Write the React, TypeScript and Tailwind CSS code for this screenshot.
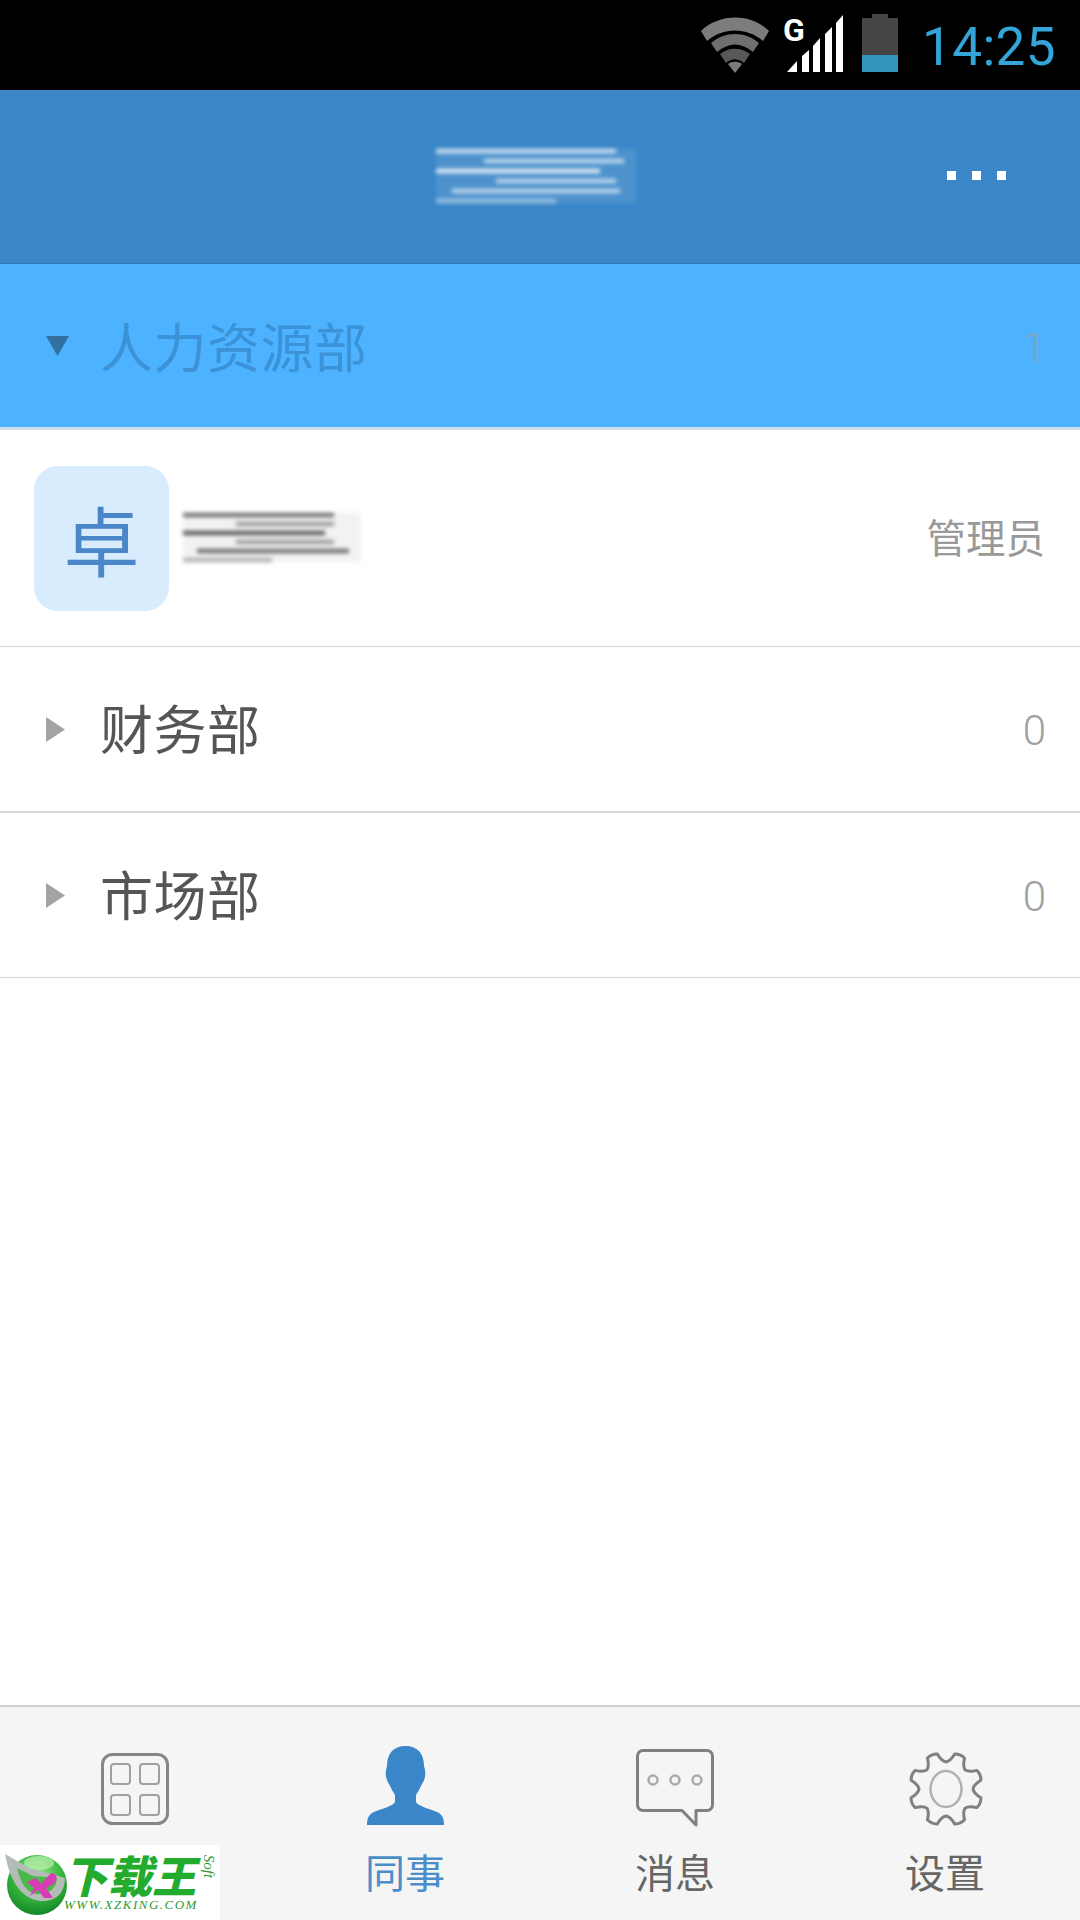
import type { ReactNode } from "react";

const cjk = "font-['Noto_Sans_CJK_SC','Noto_Sans',sans-serif]";

// 8 tooth gear outline, points worked out once at render
const gearPath = () => {
    const pts: string[] = [];
    const teeth = 8;
    for (let i = 0; i < teeth; i++) {
        const a = (i * 2 * Math.PI) / teeth + Math.PI / 8 - Math.PI / 2;
        const step = Math.PI / teeth;
        const at = (r: number, t: number) => `${(37 + r * Math.cos(t)).toFixed(1)} ${(38 + r * Math.sin(t)).toFixed(1)}`;
        const start = a - step;
        if (i === 0) pts.push(`M${at(27, start)}`);
        pts.push(`Q${at(28, a - step * 0.6)} ${at(36, a - step * 0.38)}`);
        pts.push(`Q${at(38, a)} ${at(36, a + step * 0.38)}`);
        pts.push(`Q${at(28, a + step * 0.6)} ${at(27, a + step)}`);
    }
    return pts.join(" ") + "Z";
};

function BlurredName({ tone, width }: { tone: "light" | "dark"; width: number }) {
    const rows = tone === "light"
        ? ["w-[90%] bg-white/80", "w-[70%] ml-[24%] bg-white/70", "w-[82%] bg-white/90", "w-[60%] ml-[30%] bg-white/70", "w-[84%] ml-[8%] bg-white/70", "w-[60%] bg-white/50"]
        : ["w-[85%] bg-black/60", "w-[55%] ml-[30%] bg-black/40", "w-[80%] bg-black/70", "w-[55%] ml-[30%] bg-black/40", "w-[85%] ml-[8%] bg-black/60", "w-[50%] bg-black/30"];
    return <div className={`flex flex-col blur-[2px] ${tone === "light" ? "gap-[6px] bg-white/10" : "gap-[5px] bg-black/5"}`} style={{ width }}>
        {rows.map((r, i) => <div key={i} className={`h-[4px] ${r}`} />)}
    </div>;
}

function Dept({ name, count, className, open, nameClass, countClass }: { name: string; count: string; className: string; open?: boolean; nameClass: string; countClass: string }) {
    return <div className={`flex items-center shrink-0 pl-[46px] pr-[34px] ${className}`}>
        {open
            ? <svg width="23" height="20" viewBox="0 0 23 20" className="shrink-0"><path d="M0 0H23L11.5 20Z" fill="#31709f" /></svg>
            : <svg width="19" height="25" viewBox="0 0 19 25" className="shrink-0"><path d="M0 0L19 12.5L0 25Z" fill="#a3a3a3" /></svg>}
        <span className={`${cjk} text-[53px] leading-none tracking-[0.5px] ${open ? "ml-[31px]" : "ml-[35px] -mt-[4px]"} ${nameClass}`}>{name}</span>
        <span className={`ml-auto font-['Roboto',sans-serif] font-light text-[42px] leading-none mt-[4px] ${countClass}`}>{count}</span>
    </div>;
}

function Tab({ icon, label, active }: { icon: ReactNode; label?: string; active?: boolean }) {
    return <div className="flex flex-col items-center h-full">
        <div className="h-[122px] flex items-end justify-center pb-[2px]">{icon}</div>
        {label && <span className={`${cjk} text-[40px] leading-none mt-[22px] ${active ? "text-[#4a8dc9]" : "text-[#666666]"}`}>{label}</span>}
    </div>;
}

function Watermark() {
    return <div className="absolute left-0 bottom-0 w-[220px] h-[75px] bg-white flex items-center">
        <svg width="68" height="70" viewBox="0 0 68 70" className="shrink-0 ml-[3px]">
            <defs>
                <radialGradient id="ball" cx="50%" cy="30%" r="75%">
                    <stop offset="0%" stopColor="#9be88f" />
                    <stop offset="55%" stopColor="#35b53c" />
                    <stop offset="100%" stopColor="#0f7f24" />
                </radialGradient>
            </defs>
            <circle cx="34" cy="37" r="30" fill="url(#ball)" />
            <ellipse cx="36" cy="15" rx="15" ry="7" fill="#b9f0ae" opacity="0.7" />
            <path d="M2 6L26 20L62 30C62 44 54 52 42 53C24 54 8 40 2 6Z" fill="#b5bcb8" />
            <path d="M14 20L30 28L54 30C54 40 46 46 36 46C24 46 18 36 14 20Z" fill="#4cb84c" />
            <path d="M24 34L33 30L38 36L48 25C55 25 56 34 47 38L43 40L50 50L41 50L35 42L27 48L31 40Z" fill="#d93db4" />
        </svg>
        <div className="flex flex-col shrink-0 -ml-[7px] -mt-[2px]">
            <span className={`${cjk} font-black italic text-[44px] leading-[46px] text-[#22ab2c] whitespace-nowrap`}>下载王</span>
            <span className="font-['Liberation_Serif',serif] italic text-[13px] leading-[15px] tracking-[1.5px] text-[#2a9a35] whitespace-nowrap">WWW.XZKING.COM</span>
        </div>
        <div className="w-[14px] shrink-0 flex justify-center ml-[4px] -mt-[32px]">
            <span className="shrink-0 font-['Liberation_Serif',serif] italic text-[15px] leading-none text-[#2a9a35] rotate-90">Soft</span>
        </div>
    </div>;
}

export default function App() {
    return <div className="relative w-[1080px] h-[1920px] flex flex-col bg-white overflow-hidden">
        <header className="h-[90px] shrink-0 bg-black flex items-start justify-end pr-[24px]">
            <svg width="68" height="56" viewBox="0 0 68 56" className="mt-[17px]">
                <path d="M0 14C18 -4 50 -4 68 14L62 24C46 10 22 10 6 24Z" fill="#7c7c7c" />
                <path d="M10 26C24 14 44 14 58 26L52 35C40 25 28 25 16 35Z" fill="#6f6f6f" />
                <path d="M19 37C28 30 40 30 49 37L43 46C37 41 31 41 25 46Z" fill="#585858" />
                <path d="M27 47C31 44 37 44 41 47L34 56Z" fill="#7c7c7c" />
            </svg>
            <div className="relative w-[58px] h-[58px] ml-[17px] mt-[15px]">
                <svg width="58" height="58" viewBox="0 0 58 58">
                    <path d="M1 57L11 46V57ZM16 41L23 35V57H16ZM27 31L34 23V57H27ZM39 19L46 12V57H39ZM50 8L57 0V57H50Z" fill="#ffffff" />
                </svg>
                <span className="absolute left-[-3px] top-[0px] font-['Roboto',sans-serif] font-bold text-[32px] leading-[30px] text-white">G</span>
            </div>
            <svg width="36" height="58" viewBox="0 0 36 58" className="ml-[18px] mt-[14px]">
                <path d="M10 0H26V4H36V41H0V4H10Z" fill="#454545" />
                <rect y="41" width="36" height="17" fill="#3393b8" />
            </svg>
            <span className="ml-[24px] mt-[15px] font-['Roboto',sans-serif] font-normal text-[53px] leading-[64px] tracking-[0.4px] text-[#33a5d8]">14:25</span>
        </header>

        <div className="h-[174px] shrink-0 bg-[#3a86c8] border-b border-[#3079b8] grid grid-cols-[1fr_auto_1fr] items-center">
            <div />
            <div className="-mt-[2px] -translate-x-[4px]"><BlurredName tone="light" width={200} /></div>
            <div className="flex justify-end gap-[16px] pr-[74px] -mt-[2px]">
                <div className="w-[9px] h-[9px] bg-white" />
                <div className="w-[9px] h-[9px] bg-white" />
                <div className="w-[9px] h-[9px] bg-white" />
            </div>
        </div>

        <Dept name="人力资源部" count="1" open className="h-[166px] bg-[#4db2ff] border-b-[3px] border-[#cfdbe6]" nameClass="text-[#3b92d6]" countClass="text-[#7ba5c6]" />

        <div className="h-[217px] shrink-0 flex items-center border-b border-[#d5d5d5] pl-[34px] pr-[35px]">
            <div className={`w-[135px] h-[145px] rounded-[24px] bg-[#d8ecfe] flex items-center justify-center ${cjk} text-[76px] leading-none text-[#4a86c8]`}>卓</div>
            <div className="ml-[14px] -mt-[1px]"><BlurredName tone="dark" width={178} /></div>
            <span className={`ml-auto ${cjk} text-[39.5px] leading-none text-[#999999] -mt-[4px]`}>管理员</span>
        </div>

        <Dept name="财务部" count="0" className="h-[166px] border-b-2 border-[#d8d8d8]" nameClass="text-[#555555]" countClass="text-[#9aa0a5]" />
        <Dept name="市场部" count="0" className="h-[165px] border-b border-[#d5d5d5]" nameClass="text-[#555555]" countClass="text-[#9aa0a5]" />

        <div className="flex-1" />

        <nav className="h-[215px] shrink-0 bg-[#f5f5f5] border-t-2 border-[#d0d0d0] grid grid-cols-4">
            <Tab icon={
                <svg width="68" height="72" viewBox="0 0 68 72" fill="none" className="mb-[2px]">
                    <rect x="1.5" y="1.5" width="65" height="69" rx="10" stroke="#868686" strokeWidth="3" />
                    <g stroke="#a0a0a0" strokeWidth="2">
                        <rect x="10" y="11" width="19" height="20" rx="3" />
                        <rect x="39" y="11" width="19" height="20" rx="3" />
                        <rect x="10" y="42" width="19" height="20" rx="3" />
                        <rect x="39" y="42" width="19" height="20" rx="3" />
                    </g>
                </svg>
            } />
            <Tab active label="同事" icon={
                <svg width="77" height="79" viewBox="0 0 77 79" className="mb-[2px]">
                    <path d="M38.5 0C51 0 57 8 57 20C59 26 59 32 55 38C53 42 51 46 49 49L49 56C51 60 60 62 70 66C75 68 77 72 77 79L0 79C0 72 2 68 7 66C17 62 26 60 28 56L28 49C26 46 24 42 22 38C18 32 18 26 20 20C20 8 26 0 38.5 0Z" fill="#3a86c8" />
                </svg>
            } />
            <Tab label="消息" icon={
                <svg width="78" height="78" viewBox="0 0 78 78" fill="none">
                    <path d="M7 1.5H71C74 1.5 76.5 4 76.5 7V56C76.5 59 74 61.5 71 61.5H60V76L46 61.5H7C4 61.5 1.5 59 1.5 56V7C1.5 4 4 1.5 7 1.5Z" stroke="#808080" strokeWidth="3" strokeLinejoin="round" />
                    <g stroke="#aaaaaa" strokeWidth="2.5">
                        <circle cx="17" cy="31" r="4.5" />
                        <circle cx="39" cy="31" r="4.5" />
                        <circle cx="61" cy="31" r="4.5" />
                    </g>
                </svg>
            } />
            <Tab label="设置" icon={
                <svg width="74" height="76" viewBox="0 0 74 76" fill="none" className="ml-[2px]">
                    <path d={gearPath()} stroke="#808080" strokeWidth="3" strokeLinejoin="round" />
                    <ellipse cx="37" cy="38" rx="15.5" ry="18" stroke="#b0b0b0" strokeWidth="2.5" />
                </svg>
            } />
        </nav>

        <Watermark />
    </div>;
}
